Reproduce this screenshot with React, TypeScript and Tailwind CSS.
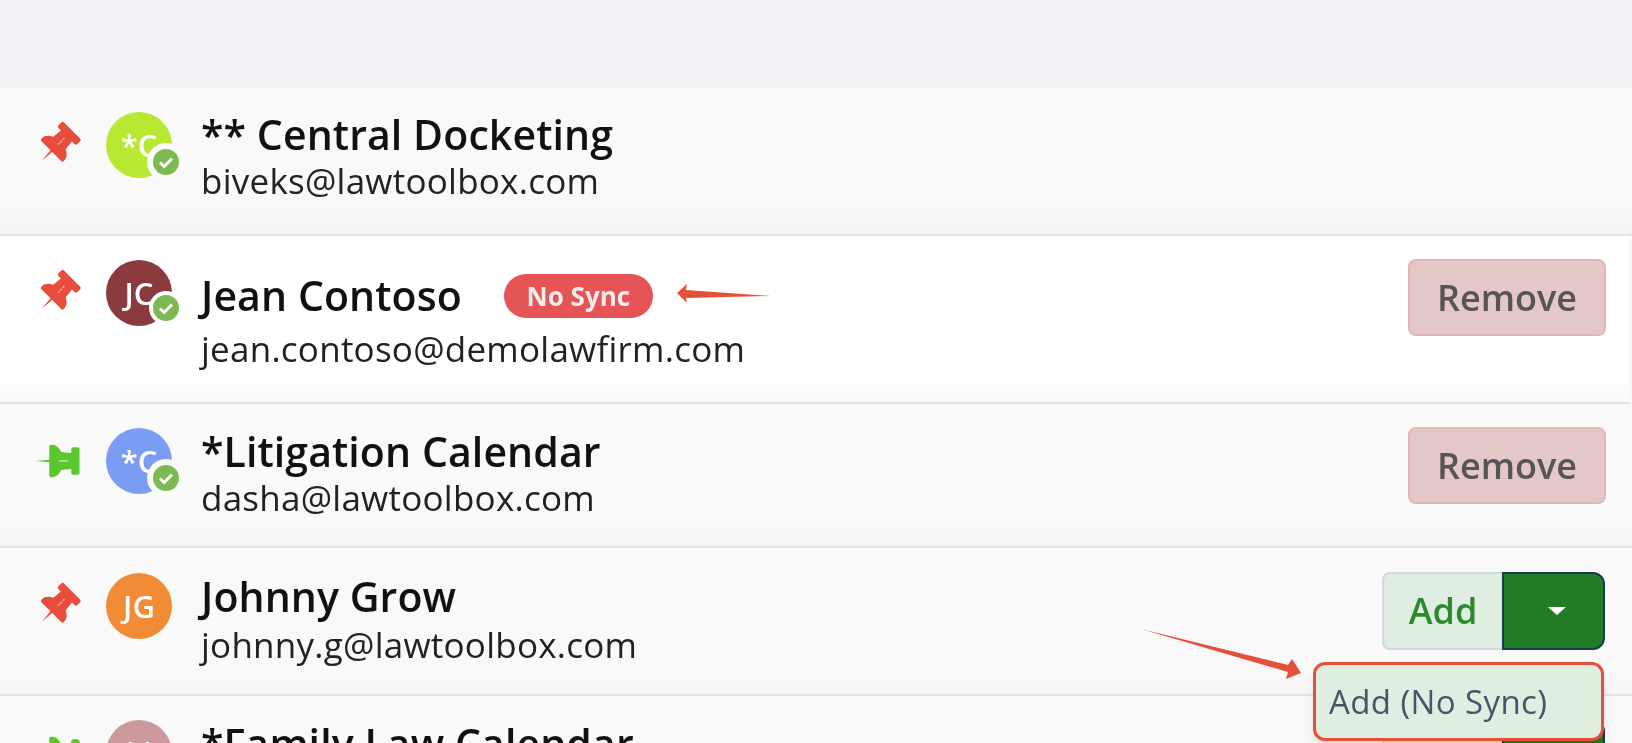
import React from "react";

const PIN =
  "M298 214L286 96h42c13 0 24-11 24-24V24c0-13-11-24-24-24H56C43 0 32 11 32 24v48c0 13 11 24 24 24h42L86 214C37 237 0 277 0 328c0 13 11 24 24 24h154l14 160 14-160h154c13 0 24-11 24-24 0-51-38-91-86-114z";

function Pin({ green }: { green?: boolean }) {
  return (
    <div className="w-[44px] h-[44px] mt-[11px] flex items-center justify-center">
      <svg
        viewBox="0 0 384 512"
        className={
          green
            ? "w-[33px] h-[46px] rotate-90 -translate-x-[1px] text-[#5ac72f]"
            : "w-[32px] h-[43px] rotate-45 -translate-x-[1px] text-[#e84c3d]"
        }
      >
        <path fill="currentColor" d={PIN} />
        <path
          d="M192 130V240"
          stroke="#ffffff"
          strokeOpacity="0.6"
          strokeWidth="16"
          strokeDasharray={green ? undefined : "30 14"}
        />
      </svg>
    </div>
  );
}

function Avatar({
  bg,
  text,
  check,
  ring,
}: {
  bg: string;
  text: string;
  check?: boolean;
  ring?: boolean;
}) {
  return (
    <div
      className={
        "relative w-[66px] h-[66px] rounded-full shrink-0 flex items-center justify-center text-white font-semibold text-[31px] leading-none " +
        bg
      }
    >
      {text}
      {check && (
        <div
          className={
            ring
              ? "absolute left-[41px] top-[31px] w-[38px] h-[38px] rounded-full bg-[#fafafa] flex items-center justify-center"
              : "absolute left-[43px] top-[31px] w-[34px] h-[34px] rounded-full bg-[#ffffff] flex items-center justify-center"
          }
        >
          <svg viewBox="0 0 26 26" className="w-[26px] h-[26px]">
            <circle cx="13" cy="13" r="13" fill="#7cb950" />
            <path
              d="M7 13.5l4.2 4L19 9.5"
              fill="none"
              stroke="#ffffff"
              strokeWidth="3"
            />
          </svg>
        </div>
      )}
    </div>
  );
}

function Remove() {
  return (
    <button className="w-[198px] h-[77px] rounded-lg bg-[#e4c8c8] border-2 border-[#e3b6b6] text-[#555555] font-semibold text-[36px] flex items-center justify-center">
      Remove
    </button>
  );
}

function AddSplit() {
  return (
    <div className="flex w-[223px] h-[78px]">
      <div className="w-[120px] rounded-l-lg bg-[#dfeee0] border-2 border-r-0 border-[#d3d6e4] text-[#2a8a2f] font-semibold text-[36px] flex items-center justify-center">
        Add
      </div>
      <div className="w-[103px] rounded-r-xl bg-[#237d26] border-2 border-[#1b3a4f] flex items-center justify-center">
        <div className="w-0 h-0 ml-[6px] border-x-[9px] border-x-transparent border-t-[8px] border-t-white" />
      </div>
    </div>
  );
}

function Name({ children }: { children: React.ReactNode }) {
  return (
    <div className="text-[#111111] font-semibold text-[41px] tracking-[0.1px] leading-[46px]">
      {children}
    </div>
  );
}

function Email({ children }: { children: React.ReactNode }) {
  return (
    <div className="text-[#222222] text-[35px] tracking-[0.25px] leading-[46px]">
      {children}
    </div>
  );
}

export default function App() {
  return (
    <div
      className="relative w-[1632px] h-[743px] overflow-hidden bg-[#f7f7f7] blur-[0.7px]"
      style={{ fontFamily: '"Open Sans", "Noto Sans", sans-serif' }}
    >
      <div className="h-[88px] bg-[#f2f3f7]" />

      <div className="flex items-start h-[148px] pl-[36px] pr-[26px] pt-[24px] bg-linear-to-b from-[#f9f9f9] from-80% to-[#f5f5f5] border-b-2 border-[#e2e2e2]">
        <div className="mr-[26px]">
          <Pin />
        </div>
        <Avatar bg="bg-[#b9e833]" text="*C" check ring />
        <div className="ml-[29px] mt-[-1px]">
          <Name>** Central Docketing</Name>
          <div className="mt-[1px]">
            <Email>biveks@lawtoolbox.com</Email>
          </div>
        </div>
      </div>

      <div className="flex items-start h-[168px] pl-[36px] pr-[23px] pt-[24px] bg-linear-to-b from-white from-85% to-[#f8f8f8] border-b-2 border-[#e2e2e2] mr-[3px]">
        <div className="mr-[26px]">
          <Pin />
        </div>
        <Avatar bg="bg-[#8b3a3d]" text="JC" check />
        <div className="ml-[29px] mt-[12px]">
          <div className="flex items-center">
            <Name>Jean Contoso</Name>
            <span className="ml-[42px] w-[149px] h-[44px] mt-[2px] rounded-full bg-[#e55555] text-[#f3ecec] font-bold text-[26px] flex items-center justify-center">
              No Sync
            </span>
          </div>
          <div className="mt-[8px]">
            <Email>jean.contoso@demolawfirm.com</Email>
          </div>
        </div>
        <div className="ml-auto -mt-px">
          <Remove />
        </div>
      </div>

      <div className="flex items-start h-[144px] pl-[36px] pr-[26px] pt-[24px] bg-linear-to-b from-[#f9f9f9] from-85% to-[#f5f5f5] border-b-2 border-[#e2e2e2]">
        <div className="mr-[26px]">
          <Pin green />
        </div>
        <Avatar bg="bg-[#7a9cf3]" text="*C" check ring />
        <div className="ml-[29px]">
          <Name>*Litigation Calendar</Name>
          <div className="mt-[1px]">
            <Email>dasha@lawtoolbox.com</Email>
          </div>
        </div>
        <div className="ml-auto -mt-px">
          <Remove />
        </div>
      </div>

      <div className="flex items-start h-[148px] pl-[36px] pr-[27px] pt-[25px] bg-linear-to-b from-[#f9f9f9] from-85% to-[#f5f5f5] border-b-2 border-[#e2e2e2]">
        <div className="mr-[26px]">
          <Pin />
        </div>
        <Avatar bg="bg-[#f18b35]" text="JG" />
        <div className="ml-[29px]">
          <Name>Johnny Grow</Name>
          <div className="mt-[3px]">
            <Email>johnny.g@lawtoolbox.com</Email>
          </div>
        </div>
        <div className="ml-auto -mt-px">
          <AddSplit />
        </div>
      </div>

      <div className="flex items-start h-[60px] pl-[36px] pr-[27px] pt-[24px] bg-[#f9f9f9]">
        <div className="mr-[26px]">
          <Pin green />
        </div>
        <Avatar bg="bg-[#cc9a9c]" text="**" />
        <div className="ml-[29px]">
          <Name>*Family Law Calendar</Name>
        </div>
        <div className="ml-auto -mt-px">
          <AddSplit />
        </div>
      </div>

      <div className="absolute left-[1313px] top-[662px] w-[291px] h-[79px] rounded-xl bg-[#dfeee0] border-[3.5px] border-[#e55039] shadow-lg flex items-center pl-[13px] text-[#44566c] text-[33px] tracking-[0.4px]">
        Add (No Sync)
      </div>

      <svg
        className="absolute left-0 top-0 w-[1632px] h-[743px] pointer-events-none"
        viewBox="0 0 1632 743"
      >
        <polygon
          points="677,293 687,284 686,290 771,296 686,298 687,303"
          fill="#e55039"
        />
        <polygon
          points="1141,629 1288,665 1292,659 1301,673 1286,679 1288,672"
          fill="#e55039"
        />
      </svg>
    </div>
  );
}
